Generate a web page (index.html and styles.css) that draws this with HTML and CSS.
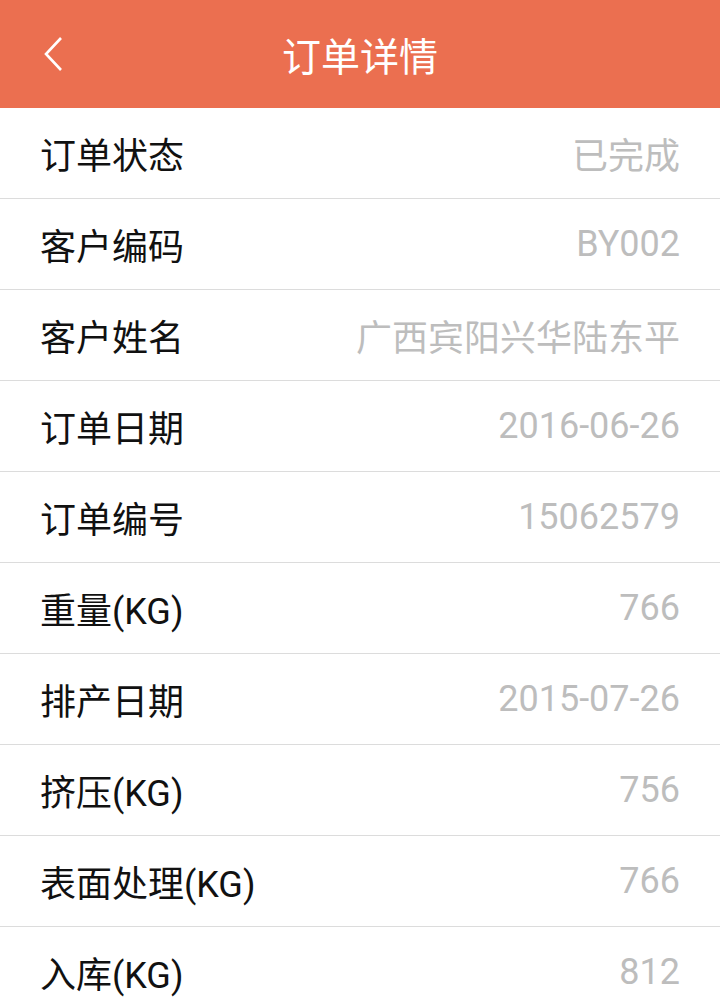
FILE: index.html
```html
<!DOCTYPE html>
<html lang="zh-CN">
<head>
  <meta charset="UTF-8" />
  <meta name="viewport" content="width=device-width, initial-scale=1.0"/>
  <title>订单详情</title>
<link rel="stylesheet" href="styles.css">
</head>
<body>
  <div class="top-bar">
    <a class="back-btn" href="#">
      <svg width="20" height="36" viewBox="0 0 20 36">
        <polyline points="17,2 2,18 17,34" fill="none" stroke="#fff" stroke-width="2.6" />
      </svg>
    </a>
    <h1>订单详情</h1>
  </div>

  <div class="detail-list">
    <div class="detail-row"><span class="label">订单状态</span><span class="value">已完成</span></div>
    <div class="detail-row"><span class="label">客户编码</span><span class="value">BY002</span></div>
    <div class="detail-row"><span class="label">客户姓名</span><span class="value">广西宾阳兴华陆东平</span></div>
    <div class="detail-row"><span class="label">订单日期</span><span class="value">2016-06-26</span></div>
    <div class="detail-row"><span class="label">订单编号</span><span class="value">15062579</span></div>
    <div class="detail-row"><span class="label">重量(KG)</span><span class="value">766</span></div>
    <div class="detail-row"><span class="label">排产日期</span><span class="value">2015-07-26</span></div>
    <div class="detail-row"><span class="label">挤压(KG)</span><span class="value">756</span></div>
    <div class="detail-row"><span class="label">表面处理(KG)</span><span class="value">766</span></div>
    <div class="detail-row"><span class="label">入库(KG)</span><span class="value">812</span></div>
  </div>
</body>
</html>
```

FILE: styles.css
```css
body {
  margin: 0;
  padding: 0;
  background: #ffffff;
  font-family: Roboto, "Noto Sans CJK SC", sans-serif;
}

.top-bar {
  position: relative;
  height: 108px;
  background: #eb6f50;
  display: flex;
  justify-content: center;
  align-items: center;
}

.top-bar h1 {
  margin: 0;
  color: #ffffff;
  font-size: 39px;
  font-weight: normal;
}

.back-btn {
  position: absolute;
  left: 44px;
  top: 36px;
  display: block;
  width: 20px;
  height: 36px;
}

.detail-list {
  display: flex;
  flex-direction: column;
}

.detail-row {
  height: 90px;
  padding: 0 40px 0 40px;
  display: flex;
  justify-content: space-between;
  align-items: center;
  border-bottom: 1px solid #dcdcdc;
  font-size: 36px;
}

.label {
  color: #111111;
}

.value {
  color: #bdbdbd;
}
```
